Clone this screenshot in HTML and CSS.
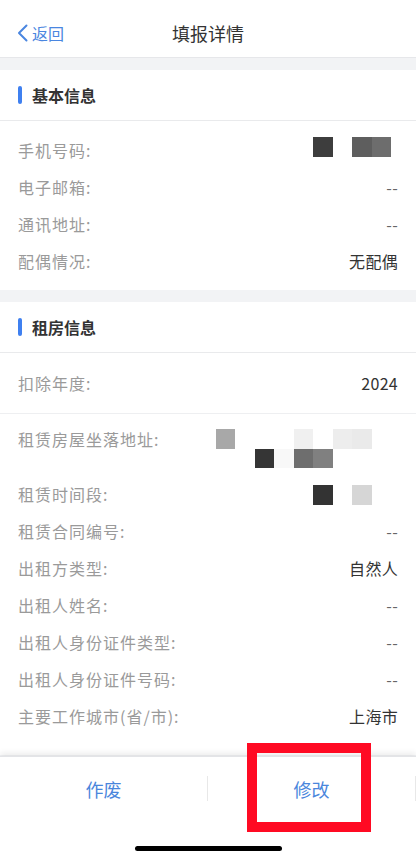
FILE: index.html
```html
<!DOCTYPE html>
<html lang="zh-CN">
<head>
    <meta charset="UTF-8" />
    <meta name="viewport" content="width=device-width, initial-scale=1.0" />
    <title>填报详情</title>
    <link rel="stylesheet" href="styles.css">
</head>
<body>
    <div class="app">
        <header class="nav">
            <a class="nav-back" href="#">
                <svg width="11" height="18" viewBox="0 0 11 18" aria-hidden="true">
                    <path d="M9.5 1.5 L2 9 L9.5 16.5" fill="none" stroke="#4a86e0" stroke-width="2" stroke-linecap="round" stroke-linejoin="round" />
                </svg>
                <span>返回</span>
            </a>
            <h1 class="nav-title">填报详情</h1>
            <span></span>
        </header>

        <main class="content">
            <section class="card">
                <h2 class="card-title">基本信息</h2>
                <ul class="info-list info-list-basic">
                    <li class="info-row">
                        <span class="info-label">手机号码:</span>
                        <span class="mosaic mosaic-4 mosaic-up">
                            <i class="c3d"></i><i></i><i class="c5e"></i><i class="c6d"></i>
                        </span>
                    </li>
                    <li class="info-row">
                        <span class="info-label">电子邮箱:</span>
                        <span class="info-value empty">--</span>
                    </li>
                    <li class="info-row">
                        <span class="info-label">通讯地址:</span>
                        <span class="info-value empty">--</span>
                    </li>
                    <li class="info-row">
                        <span class="info-label">配偶情况:</span>
                        <span class="info-value">无配偶</span>
                    </li>
                </ul>
            </section>

            <section class="card">
                <h2 class="card-title">租房信息</h2>
                <ul class="info-list info-list-year">
                    <li class="info-row">
                        <span class="info-label">扣除年度:</span>
                        <span class="info-value">2024</span>
                    </li>
                </ul>
                <ul class="info-list info-list-rent">
                    <li class="info-row">
                        <span class="info-label">租赁房屋坐落地址:</span>
                        <span class="mosaic mosaic-9">
                            <i class="ca8"></i><i></i><i></i><i></i><i class="cf0"></i><i></i><i class="ced"></i><i class="cea"></i><i></i>
                            <i></i><i></i><i class="c35"></i><i class="cf8"></i><i class="c6e"></i><i class="c80"></i><i></i><i></i><i></i>
                        </span>
                    </li>
                    <li class="info-row">
                        <span class="info-label">租赁时间段:</span>
                        <span class="mosaic mosaic-4">
                            <i class="c33"></i><i></i><i class="cd6"></i><i></i>
                        </span>
                    </li>
                    <li class="info-row">
                        <span class="info-label">租赁合同编号:</span>
                        <span class="info-value empty">--</span>
                    </li>
                    <li class="info-row">
                        <span class="info-label">出租方类型:</span>
                        <span class="info-value">自然人</span>
                    </li>
                    <li class="info-row">
                        <span class="info-label">出租人姓名:</span>
                        <span class="info-value empty">--</span>
                    </li>
                    <li class="info-row">
                        <span class="info-label">出租人身份证件类型:</span>
                        <span class="info-value empty">--</span>
                    </li>
                    <li class="info-row">
                        <span class="info-label">出租人身份证件号码:</span>
                        <span class="info-value empty">--</span>
                    </li>
                    <li class="info-row">
                        <span class="info-label">主要工作城市(省/市):</span>
                        <span class="info-value">上海市</span>
                    </li>
                </ul>
            </section>
        </main>

        <footer class="action-bar">
            <div class="actions">
                <button type="button" class="action">作废</button>
                <span class="action-sep"></span>
                <button type="button" class="action">修改</button>
                <span class="action-sep"></span>
            </div>
            <div class="home-bar"></div>
            <div class="highlight"></div>
        </footer>
    </div>
</body>
</html>
```

FILE: styles.css
```css
/* reset */
body,
h1,
h2,
p,
ul,
li {
  margin: 0;
  padding: 0;
}

* {
  box-sizing: border-box;
}

body {
  font-family: 'Noto Sans CJK SC', 'Noto Sans', sans-serif;
  color: #333;
  background-color: #f2f3f5;
}

.app {
  height: 100vh;
  display: flex;
  flex-direction: column;
  overflow: hidden;
}

/* nav */
.nav {
  height: 58px;
  padding-top: 8px;
  background-color: #fff;
  border-bottom: 1px solid #e6e7ea;
  display: grid;
  grid-template-columns: 1fr auto 1fr;
  align-items: center;
  flex-shrink: 0;
}

.nav-back {
  display: flex;
  align-items: center;
  gap: 4px;
  padding-left: 17px;
  color: #4a86e0;
  text-decoration: none;
  font-size: 16px;
}

.nav-title {
  font-size: 18px;
  font-weight: 400;
  color: #333;
}

/* content */
.content {
  flex: 1;
  overflow: hidden;
}

.card {
  margin-top: 12px;
  background-color: #fff;
}

.card-title {
  height: 51px;
  padding-left: 18px;
  border-bottom: 1px solid #e9eaec;
  display: flex;
  align-items: center;
  font-size: 16px;
  font-weight: 700;
  color: #333;
}

.card-title::before {
  content: '';
  width: 4px;
  height: 18px;
  margin-right: 10px;
  border-radius: 2px;
  background-color: #3f80f0;
}

.info-list {
  list-style: none;
}

.info-list-basic {
  padding: 11px 0 10px;
}

.info-list-year {
  padding: 12px 0 11px;
  border-bottom: 1px solid #eeeff1;
}

.info-list-rent {
  padding: 7px 0 20px;
}

.info-row {
  display: flex;
  justify-content: space-between;
  align-items: flex-start;
  padding: 8px 18px;
  line-height: 21px;
  font-size: 16px;
}

.info-label {
  color: #9a9a9a;
  letter-spacing: 1px;
}

.info-value {
  color: #333;
  letter-spacing: 0.3px;
}

.info-value.empty {
  color: #666;
}

/* blurred values */
.mosaic {
  display: grid;
  grid-auto-rows: 19.5px;
  padding-right: 7px;
  margin-top: 1px;
}

.mosaic-up {
  margin-top: -3px;
}

.mosaic-4 {
  grid-template-columns: repeat(4, 19.5px);
}

.mosaic-9 {
  grid-template-columns: repeat(9, 19.5px);
  margin-top: 0;
}

.mosaic i { display: block; }
.c33 { background-color: #333; }
.c35 { background-color: #353535; }
.c3d { background-color: #3d3d3d; }
.c5e { background-color: #5e5e5e; }
.c6d { background-color: #6d6d6d; }
.c6e { background-color: #6e6e6e; }
.c80 { background-color: #808080; }
.ca8 { background-color: #a8a8a8; }
.cd6 { background-color: #d6d6d6; }
.cea { background-color: #eaeaea; }
.ced { background-color: #ededed; }
.cf0 { background-color: #f0f0f0; }
.cf8 { background-color: #f8f8f8; }

/* bottom bar */
.action-bar {
  position: relative;
  height: 104px;
  flex-shrink: 0;
  background-color: #fff;
  box-shadow: 0 -3px 6px rgba(0, 0, 0, 0.08);
  border-top: 1px solid #e3e4e7;
}

.actions {
  height: 63px;
  display: flex;
  align-items: center;
}

.action {
  flex: 1;
  height: 100%;
  border: none;
  background: none;
  font-family: inherit;
  font-size: 18px;
  color: #4a86dc;
  cursor: pointer;
}

.action-sep {
  width: 1px;
  height: 25px;
  background-color: #e8e8e8;
}

.home-bar {
  width: 147px;
  height: 5px;
  margin: 26px auto 0;
  border-radius: 3px;
  background-color: #000;
}

.highlight {
  position: absolute;
  left: 247px;
  top: -14px;
  width: 124px;
  height: 89px;
  border: 10px solid #ff0a23;
}
```
